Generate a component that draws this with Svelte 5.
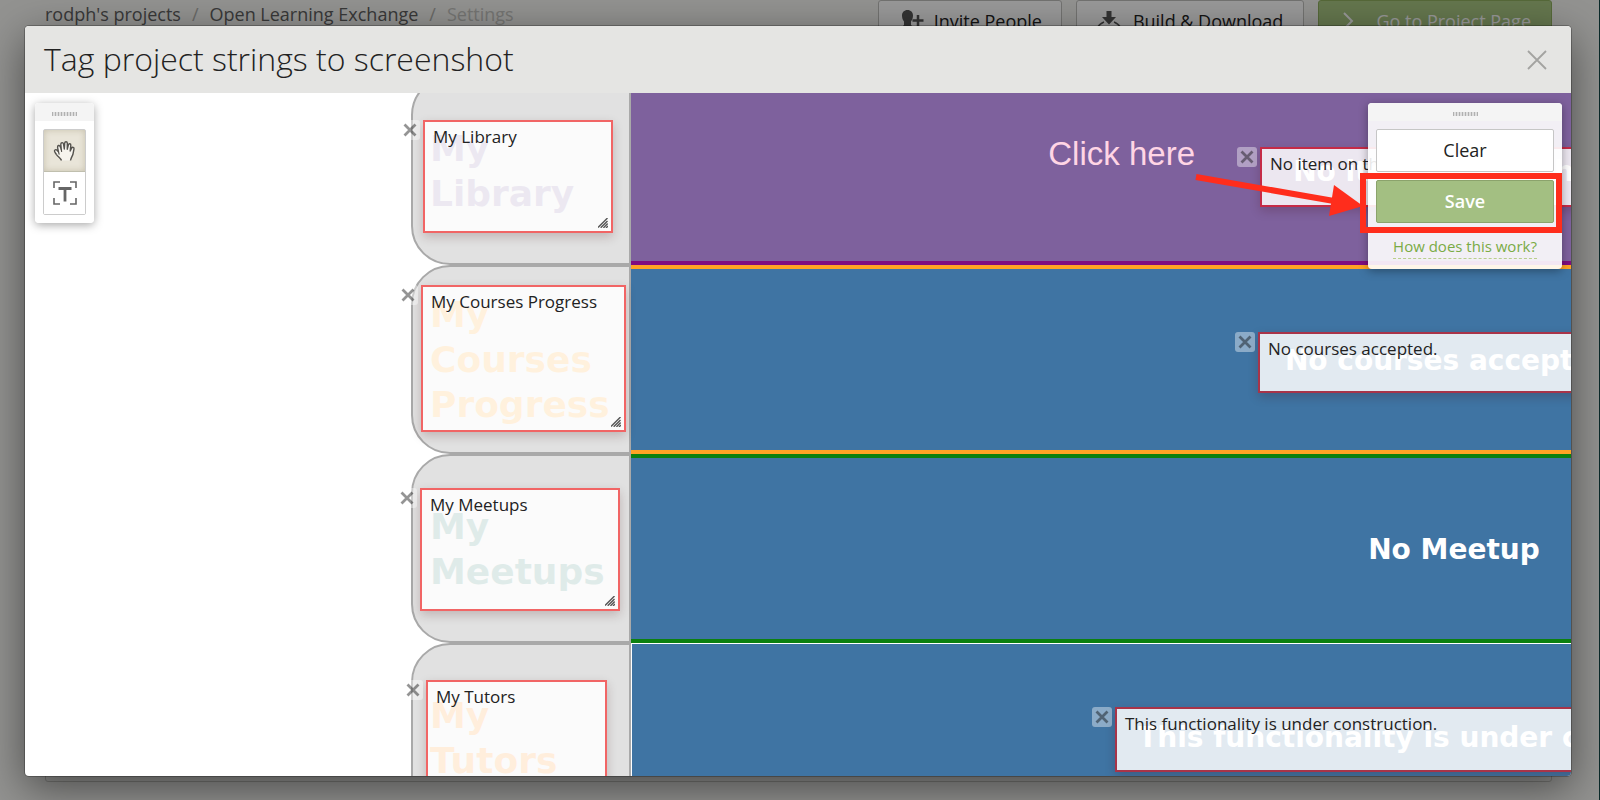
<script>
  const rows = [
    { title: ['My', 'Library'], ink: '#8066a1', note: 'No item on the shelf', tone: 'library' },
    { title: ['My', 'Courses', 'Progress'], ink: '#ffa31c', note: 'No courses accepted.', tone: 'courses' },
    { title: ['My', 'Meetups'], ink: '#2b7a6d', note: 'No Meetup', tone: 'meetups' },
    { title: ['My', 'Tutors'], ink: '#ff8a1a', note: 'This functionality is under construction.', tone: 'tutors' }
  ];

  const tags = [
    { text: 'My Library', x: 398, y: 27, w: 190, h: 113 },
    { text: 'My Courses Progress', x: 396, y: 192, w: 205, h: 147 },
    { text: 'My Meetups', x: 395, y: 395, w: 200, h: 123 },
    { text: 'My Tutors', x: 401, y: 587, w: 181, h: 125 },
    { text: 'No item on the shelf', x: 1235, y: 54, w: 390, h: 60 },
    { text: 'No courses accepted.', x: 1233, y: 239, w: 396, h: 61 },
    { text: 'This functionality is under construction.', x: 1090, y: 614, w: 690, h: 65 }
  ];

  let tool = $state('move');
</script>

<div class="page">
  <header class="topbar">
    <nav class="crumbs" aria-label="Breadcrumb">
      <a href="#projects">rodph's projects</a><span class="sep">/</span><a href="#ole">Open Learning Exchange</a><span class="sep">/</span><span class="current">Settings</span>
    </nav>
    <div class="actions">
      <button class="action invite" type="button">
        <svg width="24" height="24" viewBox="0 0 24 24" aria-hidden="true">
          <path d="M6.500 1C9.800 1 12 3.300 12 6.600c0 2.600-.9 4.600-2 6V16c1.500 1.500 3 2 3 5H0c0-3 1.500-3.500 3-5v-3.400c-1.200-1.400-2-3.400-2-6C1 3.300 3.200 1 6.500 1z" fill="#555" />
          <path d="M17 6v11M11.500 11.500h11" stroke="#555" stroke-width="2.500" />
        </svg>
        Invite People
      </button>
      <button class="action build" type="button">
        <svg width="26" height="24" viewBox="0 0 26 24" aria-hidden="true">
          <path d="M10.500 2h5v6H20l-7 7.500L6 8h4.500z" fill="#555" />
          <path d="M8 13c-3 1-5 3-6.500 5.500V22h23v-3.500c-1.500-2.500-3.500-4.500-6.500-5.500" fill="none" stroke="#555" stroke-width="1.500" />
        </svg>
        Build &amp; Download
      </button>
      <button class="action go" type="button">
        <svg width="14" height="20" viewBox="0 0 14 20" aria-hidden="true">
          <path d="M2 2l8 8-8 8" fill="none" stroke="#fff" stroke-width="2" />
        </svg>
        Go to Project Page
      </button>
    </div>
  </header>
  <main class="sheet"></main>
  <div class="backdrop"></div>
  <div class="edge"></div>

  <div class="modal" role="dialog" aria-labelledby="dialog-title">
    <div class="modal-head">
      <h1 id="dialog-title">Tag project strings to screenshot</h1>
      <button class="close" type="button" aria-label="Close">
        <svg width="20" height="20" viewBox="0 0 20 20"><path d="M1 1l18 18M19 1L1 19" stroke="#a3a3a1" stroke-width="1.800" /></svg>
      </button>
    </div>

    <div class="stage">
      <div class="board">
        {#each rows as row}
          <div class="tab">
            <div class="tab-title" style:color={row.ink}>
              {#each row.title as line}<span>{line}</span>{/each}
            </div>
          </div>
          <div class="band {row.tone}">{row.note}</div>
        {/each}
      </div>

      {#each tags as tag}
        <div class="tag" style:left="{tag.x}px" style:top="{tag.y}px" style:width="{tag.w}px" style:height="{tag.h}px">
          <button class="remove" type="button" aria-label="Remove tag {tag.text}">
            <svg width="14" height="14" viewBox="0 0 14 14"><path d="M1.500 1.500l11 11M12.500 1.500l-11 11" stroke="#000" stroke-opacity=".42" stroke-width="2.800" /></svg>
          </button>
          <textarea aria-label="Tagged string" spellcheck="false" value={tag.text}></textarea>
          <svg class="grip" width="10" height="10" viewBox="0 0 10 10" aria-hidden="true">
            <path d="M0 9.500L9.500 0M2.700 9.800L9.500 3M5.400 9.900l4.300-4.300M8 10l2-2" stroke="#555" stroke-width="1.400" />
          </svg>
        </div>
      {/each}

      <div class="panel tools">
        <div class="handle"><i></i></div>
        <div class="tool-list">
          <button type="button" class:active={tool === 'move'} aria-label="Move" onclick={() => (tool = 'move')}>
            <svg width="24" height="22" viewBox="0 0 24 22">
              <path d="M8.500 20.500C7.500 18 5 16.800 3.300 14.300 2.500 12.800 1.200 12 1.500 10.600c.4-1.300 2-1.200 2.700-.2l1.300 1.400L4.600 7.600C4.200 5.400 6.400 4.600 7.200 6.600L8.300 9.600 7.800 4.400C7.700 2.400 10 2 10.500 3.900L11.300 9 11.700 3c.2-1.700 2.500-1.600 2.600 0V9.200L15.400 4.800c.5-1.700 2.600-1.200 2.400.5L17.200 11l1.400-2.900c.7-1.400 2.700-.8 2.400.8L20 14c-.5 2.300-2 3.500-2.500 6.500" fill="#f6f4ee" stroke="#55534e" stroke-width="1.400" stroke-linejoin="round" />
              <path d="M5.500 11.800l.6 2.400M8.300 9.600l.3 1.800" fill="none" stroke="#55534e" stroke-width="1.200" stroke-linecap="round" />
            </svg>
          </button>
          <button type="button" class:active={tool === 'text'} aria-label="Tag text" onclick={() => (tool = 'text')}>
            <svg width="24" height="24" viewBox="0 0 24 24">
              <path d="M1 7V1h6M17 1h6v6M23 17v6h-6M7 23H1v-6" fill="none" stroke="#666" stroke-width="1.600" />
              <path d="M5.500 7.500h13M12 7.500V20.500" stroke="#666" stroke-width="2.800" />
            </svg>
          </button>
        </div>
      </div>

      <div class="panel confirm">
        <div class="handle"><i></i></div>
        <div class="confirm-body">
          <button class="clear" type="button">Clear</button>
          <button class="save" type="button">Save</button>
          <a href="#help">How does this work?</a>
        </div>
      </div>

      <div class="callout">Click here</div>
      <svg class="arrow" width="170" height="50" viewBox="0 0 170 50" aria-hidden="true">
        <path d="M3 11L141 35" stroke="#ff2d1c" stroke-width="6" />
        <path d="M170 40L141 19l-5 31z" fill="#ff2d1c" />
      </svg>
      <div class="highlight"></div>
    </div>
  </div>
</div>

<style>
  :global(body) {
    margin: 0;
  }

  .page {
    position: relative;
    display: flex;
    flex-direction: column;
    height: 100vh;
    overflow: hidden;
    background: #f5f5f2;
    color: #222;
    font-family: 'Open Sans', sans-serif;
    font-size: 17px;
  }

  .page * {
    box-sizing: border-box;
  }

  button,
  textarea {
    font: inherit;
    color: inherit;
  }

  button {
    padding: 0;
    cursor: pointer;
  }

  .topbar {
    display: flex;
    justify-content: space-between;
    align-items: flex-start;
    padding: 0 48px 0 45px;
  }

  .crumbs {
    font-size: 18px;
    line-height: 28px;
    color: #c4c4c0;
  }

  .crumbs a {
    color: #606060;
    text-decoration: none;
  }

  .sep {
    margin: 0 11px;
    color: #b0b0ac;
  }

  .actions {
    display: flex;
    gap: 14px;
  }

  .action {
    display: flex;
    align-items: center;
    height: 42px;
    border: 1px solid #c0c0bc;
    border-radius: 3px;
    background: #fff;
    font-size: 18px;
  }

  .invite {
    gap: 9px;
    padding: 0 19px 0 22px;
  }

  .build {
    gap: 11px;
    padding: 0 20px 0 19px;
  }

  .go {
    gap: 20px;
    padding: 0 20px 0 23px;
    border-color: #8fb060;
    background: #a8c683;
    color: #fff;
  }

  .sheet {
    flex: 1;
    margin: 0 48px 18px 45px;
    border: 1px solid #c8c8c4;
    border-radius: 3px;
  }

  .backdrop {
    position: absolute;
    inset: 0;
    background: rgba(0, 0, 0, 0.4);
  }

  .edge {
    position: absolute;
    inset: 0 0 0 auto;
    width: 1px;
    background: #0b2a2a;
  }

  .modal {
    position: absolute;
    inset: 26px 29px 24px 25px;
    display: flex;
    flex-direction: column;
    overflow: hidden;
    border-radius: 4px;
    background: #fff;
    box-shadow: 0 0 0 1px rgba(0, 0, 0, 0.25), 0 12px 44px rgba(0, 0, 0, 0.5);
  }

  .modal-head {
    display: flex;
    flex: none;
    justify-content: space-between;
    align-items: center;
    height: 67px;
    padding: 0 24px 2px 19px;
    background: #e5e5e3;
  }

  h1 {
    margin: 0;
    font-size: 32px;
    font-weight: 300;
    line-height: 44px;
  }

  .close {
    display: flex;
    margin-top: 2px;
    border: 0;
    background: none;
  }

  .stage {
    position: relative;
    flex: 1;
    min-height: 0;
    overflow: hidden;
  }

  .board {
    display: grid;
    grid-template-columns: 220px 1646px;
    grid-auto-rows: 189px;
    margin: -17px 0 0 386px;
    font-family: 'DejaVu Sans', Verdana, sans-serif;
    font-weight: 700;
  }

  .tab {
    display: flex;
    align-items: center;
    padding-left: 17px;
    border: 2px solid #a9a9a9;
    border-radius: 39px 0 0 39px;
    background: #e1e1e1;
    font-size: 36px;
    line-height: 45px;
  }

  .tab-title {
    display: flex;
    flex-direction: column;
  }

  .band {
    display: flex;
    justify-content: center;
    align-items: center;
    padding-top: 2px;
    border: 0 solid #3f74a3;
    border-width: 4px 0;
    background: #3f74a3;
    color: #fff;
    font-size: 28px;
    white-space: nowrap;
  }

  .library {
    border-color: #800d80;
    background: #7e619d;
  }

  .courses {
    border-color: #ffa324;
  }

  .meetups {
    border-color: #0c800f;
  }

  .tutors {
    border-width: 1px 0 4px 1px;
    border-top-color: #fff;
    border-left-color: #fff;
  }

  .tag {
    position: absolute;
  }

  .tag textarea {
    display: block;
    width: 100%;
    height: 100%;
    padding: 3px 8px;
    overflow: hidden;
    border: 2px solid rgba(255, 0, 0, 0.55);
    border-radius: 0;
    outline: none;
    background: rgba(255, 255, 255, 0.85) padding-box;
    box-shadow: 0 4px 10px rgba(60, 0, 0, 0.2);
    line-height: 23px;
    resize: none;
  }

  .remove {
    position: absolute;
    top: 0;
    right: 100%;
    display: flex;
    justify-content: center;
    align-items: center;
    width: 20px;
    height: 20px;
    margin-right: 3px;
    border: 0;
    border-radius: 3px;
    background: rgba(255, 255, 255, 0.4);
  }

  .grip {
    position: absolute;
    right: 5px;
    bottom: 5px;
  }

  .panel {
    position: absolute;
    top: 10px;
    overflow: hidden;
    border-radius: 4px;
    background: rgba(255, 255, 255, 0.9);
    box-shadow: 0 2px 10px rgba(0, 0, 0, 0.35);
  }

  .handle {
    display: flex;
    justify-content: center;
    align-items: center;
    height: 18px;
    padding-top: 4px;
    background: #f4f4f4;
  }

  .handle i {
    width: 25px;
    height: 4px;
    background: repeating-linear-gradient(90deg, #b0b0b0 0 1px, #dedede 1px 3px);
  }

  .tools {
    left: 10px;
  }

  .tool-list {
    display: flex;
    flex-direction: column;
    margin: 8px;
    border: 1px solid #ccc;
    border-radius: 2px;
  }

  .tool-list button {
    display: flex;
    justify-content: center;
    align-items: center;
    width: 41px;
    height: 42px;
    border: 0;
    background: #fff;
  }

  .tool-list .active {
    border-bottom: 1px solid #c0bfae;
    background: #e9e5d9;
    box-shadow: inset 0 0 6px rgba(120, 110, 70, 0.3);
  }

  .confirm {
    right: 9px;
    width: 194px;
  }

  .confirm-body {
    display: flex;
    flex-direction: column;
    align-items: center;
    padding: 8px 8px 10px;
  }

  .clear,
  .save {
    width: 100%;
    height: 43px;
    margin-bottom: 8px;
    border: 1px solid #c6c6c6;
    border-radius: 2px;
    background: #fff;
    font-size: 18px;
    line-height: 39px;
  }

  .save {
    border-color: #8ba36c;
    background: #a3bf82;
    color: #fff;
    font-weight: 600;
  }

  .confirm a {
    margin-top: 4px;
    border-bottom: 1px dashed #b9cf8c;
    color: #7aab45;
    font-size: 15px;
    line-height: 23px;
    text-decoration: none;
  }

  .callout {
    position: absolute;
    top: 41px;
    right: 376px;
    color: #ffd5e5;
    font-family: 'Liberation Sans', Arial, sans-serif;
    font-size: 33px;
    line-height: 40px;
    pointer-events: none;
  }

  .arrow {
    position: absolute;
    top: 73px;
    right: 208px;
    pointer-events: none;
  }

  .highlight {
    position: absolute;
    top: 80px;
    right: 9px;
    width: 202px;
    height: 60px;
    border: 6px solid #ff2d1c;
    pointer-events: none;
  }
</style>
